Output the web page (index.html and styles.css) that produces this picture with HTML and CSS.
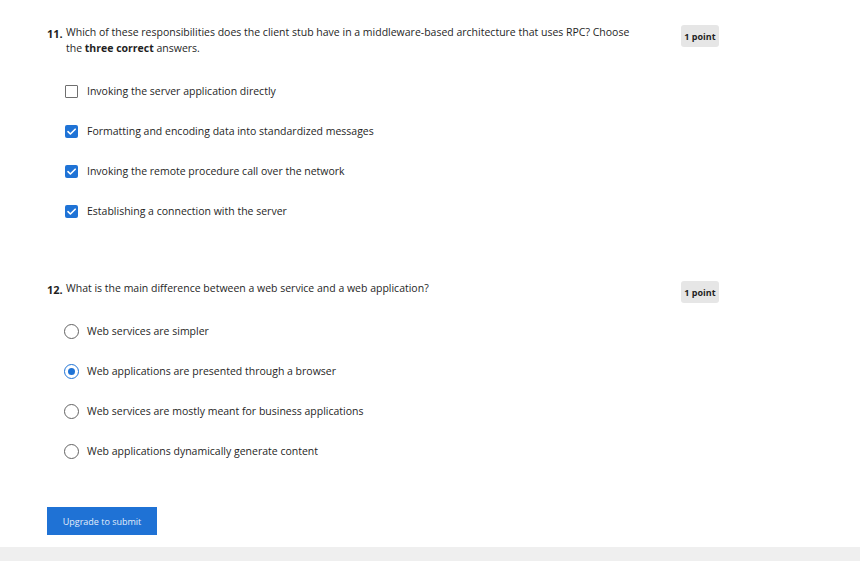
FILE: index.html
```html
<!DOCTYPE html>
<html>
<head>
<meta charset="utf-8">
<link rel="stylesheet" href="styles.css">
</head>
<body>
<main class="page">
  <section class="question q1">
    <div class="q-head">
      <span class="q-num">11.</span>
      <p class="q-text">Which of these responsibilities does the client stub have in a middleware-based architecture that uses RPC? Choose the <b class="em">three correct</b> answers.</p>
      <span class="badge">1 point</span>
    </div>
    <ul class="options">
      <li class="option"><span class="box"></span><span class="label">Invoking the server application directly</span></li>
      <li class="option"><span class="box checked"><svg viewBox="0 0 13 13" width="13" height="13"><path d="M3 6.6 L5.4 9 L10.2 4.2" fill="none" stroke="#fff" stroke-width="1.6" stroke-linecap="round" stroke-linejoin="round"/></svg></span><span class="label">Formatting and encoding data into standardized messages</span></li>
      <li class="option"><span class="box checked"><svg viewBox="0 0 13 13" width="13" height="13"><path d="M3 6.6 L5.4 9 L10.2 4.2" fill="none" stroke="#fff" stroke-width="1.6" stroke-linecap="round" stroke-linejoin="round"/></svg></span><span class="label">Invoking the remote procedure call over the network</span></li>
      <li class="option"><span class="box checked"><svg viewBox="0 0 13 13" width="13" height="13"><path d="M3 6.6 L5.4 9 L10.2 4.2" fill="none" stroke="#fff" stroke-width="1.6" stroke-linecap="round" stroke-linejoin="round"/></svg></span><span class="label">Establishing a connection with the server</span></li>
    </ul>
  </section>

  <section class="question q2">
    <div class="q-head">
      <span class="q-num">12.</span>
      <p class="q-text">What is the main difference between a web service and a web application?</p>
      <span class="badge">1 point</span>
    </div>
    <ul class="options">
      <li class="option"><span class="radio"></span><span class="label">Web services are simpler</span></li>
      <li class="option"><span class="radio selected"></span><span class="label">Web applications are presented through a browser</span></li>
      <li class="option"><span class="radio"></span><span class="label">Web services are mostly meant for business applications</span></li>
      <li class="option"><span class="radio"></span><span class="label">Web applications dynamically generate content</span></li>
    </ul>
  </section>

  <div class="actions">
    <button class="submit">Upgrade to submit</button>
  </div>
</main>
<footer class="footer"></footer>
</body>
</html>
```

FILE: styles.css
```css
* { box-sizing: border-box; }
html, body { margin: 0; padding: 0; background: #fff; }
body {
  font-family: "Open Sans", "Noto Sans", sans-serif;
  color: #1f1f1f;
  font-size: 10.5px;
  width: 860px;
  height: 561px;
  display: flex;
  flex-direction: column;
  overflow: hidden;
}
.page {
  flex: 1;
  padding: 24px 0 0 47px;
}
.question { width: 672px; }
.q-head {
  display: flex;
  align-items: flex-start;
}
.q-num {
  font-weight: 700;
  font-size: 11px;
  width: 19px;
  flex: none;
  padding-top: 2px;
  line-height: 16px;
}
.q-text {
  margin: 0;
  width: 572px;
  line-height: 16px;
  font-size: 10.5px;
}
.q-text .em { font-weight: 700; }
.badge {
  margin-left: auto;
  flex: none;
  background: #e6e6e6;
  border-radius: 3px;
  font-size: 9px;
  font-weight: 700;
  width: 38px;
  height: 22px;
  display: flex;
  align-items: center;
  justify-content: center;
  margin-top: 1px;
}
.options {
  list-style: none;
  margin: 0;
  padding: 0 0 0 18px;
}
.option {
  display: flex;
  align-items: center;
  height: 40px;
}
.q1 .options { margin-top: 15px; }
.q2 .options { margin-top: 8px; }
.q2 { margin-top: 49px; }
.box {
  width: 13px;
  height: 13px;
  border: 1.6px solid #6f6f6f;
  border-radius: 1px;
  flex: none;
  display: flex;
}
.box.checked {
  background: #1f73d6;
  border: none;
  border-radius: 2px;
}
.radio {
  width: 15px;
  height: 15px;
  border: 1.6px solid #636363;
  border-radius: 50%;
  flex: none;
  margin-left: -1px;
  margin-right: -1px;
  display: flex;
  align-items: center;
  justify-content: center;
}
.radio.selected { border-color: #1f73d6; }
.radio.selected::after {
  content: "";
  width: 7px;
  height: 7px;
  border-radius: 50%;
  background: #1f73d6;
}
.label {
  margin-left: 9px;
  font-size: 10.5px;
  line-height: 16px;
  margin-top: -1px;
}
.actions { margin-top: 36px; }
.submit {
  display: block;
  width: 110px;
  height: 28px;
  background: #1f72d5;
  border: none;
  border-radius: 0;
  color: #e3edfa;
  font-family: "Open Sans", "Noto Sans", sans-serif;
  font-size: 9px;
  padding: 0;
}
.footer {
  height: 14px;
  background: #efefef;
  flex: none;
}
```
